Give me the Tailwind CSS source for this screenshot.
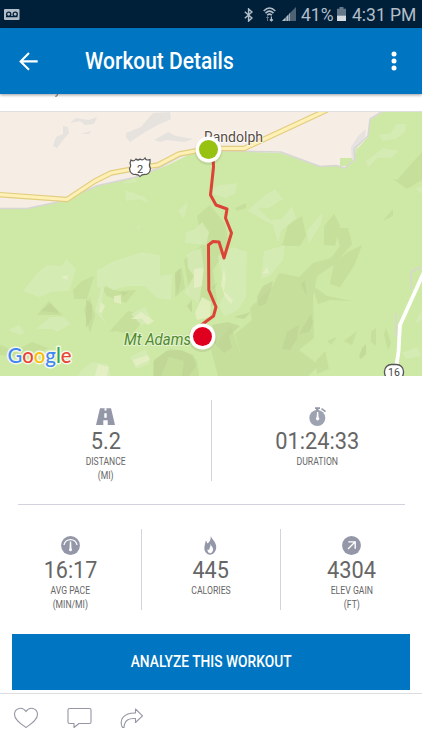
<!DOCTYPE html>
<html lang="en">
<head>
<meta charset="utf-8">
<title>Workout Details</title>
<script src="https://cdn.jsdelivr.net/npm/@tailwindcss/browser@4"></script>
</head>
<body class="w-[422px] h-[750px] overflow-hidden bg-white font-['Roboto',sans-serif] text-[#666] flex flex-col">
<div class="h-7 shrink-0 bg-[#00203a] flex items-center pl-1 pr-[5px] text-[17.5px] leading-none text-[#b3bfc8]">
  <svg class="w-4 h-[11px]" viewBox="0 0 16 11"><rect width="15.5" height="11" rx="1" fill="#b3bfc8"/><g fill="none" stroke="#00203a" stroke-width="1.3"><circle cx="4.7" cy="5.2" r="2.1"/><circle cx="11.2" cy="5.2" r="2.1"/><path d="M2 7.6h11.5"/></g></svg>
  <svg class="ml-auto w-[9px] h-[14px] mt-px" viewBox="0 0 9 14" fill="none" stroke="#b3bfc8" stroke-width="1.5"><path d="M.8 3.7 8 10 4.6 13V1L8 4 .8 10.3"/></svg>
  <svg class="ml-[10px] w-[13px] h-[15px]" viewBox="0 0 13 15" fill="none" stroke="#b3bfc8" stroke-width="1.5"><path d="M.7 4Q6.5-1.8 12.3 4M2.5 6.1Q6.5 2.2 10.5 6.1M4.2 8.3Q6.5 6 8.8 8.3"/><path d="m3.2 11 1.3-1.5L5.8 11M4.5 9.8V14" stroke-width="1" stroke="#647889"/><path d="M6.8 12.500 8.400 14l1.600-1.500M8.400 9.500v4.300" stroke-width="1.200"/></svg>
  <svg class="ml-[6px] w-[15px] h-[14px]" viewBox="0 0 15 14"><path d="M0 14 14 0v14Z" fill="#4d6375"/><path d="M0 14 3.5 10.5V14ZM4.5 9.5 6.3 7.7V14H4.5Z" fill="#b3bfc8"/><path d="M7.2 6.8 8 6v8h-.8Z" fill="#b3bfc8"/></svg>
  <span class="ml-[4px] mt-[3px] w-[33px]">41%</span>
  <svg class="ml-[3px] w-[9px] h-[14px]" viewBox="0 0 9 14"><path d="M2.5 0h4v1.800H9V14H0V1.800h2.500Z" fill="#647889"/><path d="M0 8.700h9V14H0Z" fill="#d5dce1"/></svg>
  <span class="ml-[6px] mt-[3px] w-[65px] whitespace-nowrap">4:31 PM</span>
</div>
<header class="relative z-10 h-[66px] shrink-0 bg-[#0075c1] shadow-[0_1px_3px_rgba(0,0,0,.4)] flex items-center pl-[19px] text-white">
  <svg class="w-[19px] h-[19px]" viewBox="0 0 19 19" fill="none" stroke="#fff" stroke-width="2.1"><path d="M18.7 9.4H1.7M10 1 1.6 9.4 10 17.8"/></svg>
  <h1 class="ml-[46.5px] pt-px w-[180px] origin-left scale-x-[.855] text-[24.5px] leading-none font-medium whitespace-nowrap">Workout Details</h1>
  <svg class="ml-auto mr-[25px] w-[6px] h-[20px]" viewBox="0 0 6 20" fill="#fff"><circle cx="3" cy="3.1" r="2.5"/><circle cx="3" cy="10" r="2.5"/><circle cx="3" cy="16.9" r="2.5"/></svg>
</header>
<div class="h-[18px] shrink-0 border-b border-[#dedee0] pl-[55px]"><svg class="w-1 h-[3px]" viewBox="0 0 4 3"><path d="M0 2Q2 3 2.5 0" fill="none" stroke="#888" stroke-width="1.2"/></svg></div>
<svg class="w-[422px] h-[264px] shrink-0 block" viewBox="0 112 422 264">
  <rect y="112" width="422" height="264" fill="#cee8a5"/>
  <!-- terrain relief -->
  <g fill="#c5df9b" opacity=".85">
    <path d="M241 355 235 334 252 320 250 308 272 287 279 273 299 277 313 263 331 258 340 246 335 228 348 228 352 244 335 264 317 276 313 297 314 338 299 350 319 365 308 376H218L211 350 231 326Z"/>
    <path d="M197 216 210 205 225 224 229 245 213 270 217 301 209 309 190 296 184 260 202 245Z"/>
    <path d="M288 225 302 216 306 236 300 246 282 246ZM324 226 334 214 340 225 335 246 324 245ZM397 180 422 152V180L407 189 393 179ZM334 263 348 252 362 245 354 266 340 287 330 284ZM73 290 82 281 94 276 87 299 74 299ZM37 315 49 301 62 315ZM84 310 90 297 95 316 90 333ZM312 285 327 296 352 301 330 300 318 304ZM316 361 325 351 329 369 317 374ZM327 341 337 337 331 345ZM344 341 357 331 352 345ZM371 332 376 328 376 346 371 342ZM386 328 391 343 388 350 384 335ZM100 285 118 291 136 290 126 303 107 296ZM175 272 182 268 185 288 175 297ZM0 345 15 351 32 342 48 348 34 358 0 355ZM109 332 128 311 146 316 131 336 117 331ZM153 362 170 349 184 351 197 360 199 376H153ZM235 208 246 203 246 208 237 211ZM386 217 393 209 393 216 383 221Z"/>
  </g>
  <g fill="#d7ebb8" opacity=".8">
    <path d="M23 291 38 272 47 265 62 266 66 259 76 269 69 291 52 292 39 297ZM97 270 114 261 127 257 142 252 160 255 160 276 172 274 171 300 157 298 145 286 128 286 113 290 105 285 100 310 106 324 95 311 101 289 97 286ZM36 329 50 317 64 317 71 324 57 332 53 329ZM187 254 201 248 204 270 199 303 184 293 194 276 188 268ZM218 256 233 247 247 252 246 298 237 311 224 316 219 306 225 293ZM264 251 285 245 283 260 270 276 261 279ZM8 330 19 325 25 333 20 335ZM130 357 146 349 150 364 136 369ZM80 372 91 362 108 364 111 376H78ZM131 314 145 307 153 322 141 325ZM210 190 220 185 237 183 236 193 226 198 210 193ZM247 211 265 195 275 189 283 199 269 208 258 208 270 220 282 219 292 206 296 218 281 231 278 243 273 225ZM307 231 323 212 321 224 309 244ZM185 243 186 232 195 229 202 222 209 232 206 245ZM366 161 383 148 399 151 391 158 377 158 368 168ZM382 141 379 134 390 134 396 124 406 124 405 132 396 139ZM125 190 145 197 148 203 139 199 126 201ZM121 184 135 178 137 182ZM136 228 140 224 139 229ZM178 211 188 202 184 219ZM415 188 422 187V194ZM414 324 422 310V320ZM402 353 417 347 422 356 406 359Z"/>
  </g>
  <g fill="#e6f0c5" opacity=".8"><path d="M221 285 224 268 226 278 224 291 233 300 231 304 225 297ZM131 319 141 312 154 321 148 325 142 319ZM99 312 101 302 105 306 102 313ZM114 296 121 295 121 304 114 302ZM195 313 202 297 211 302 210 317 197 320ZM95 376 98 364 109 367 107 376ZM61 277 68 275 67 280ZM262 274 267 267 269 273ZM194 269 203 268 202 286 194 288ZM133 360 148 355 150 360 136 366Z"/></g>
  <g fill="#bdd393" opacity=".65"><path d="M257 297 263 286 273 281 271 289 266 304 258 306ZM282 349 287 332 299 325 297 339 290 350ZM299 334 311 314 313 323 309 332ZM359 357 362 348 366 344 366 354 361 359ZM301 284 305 280 307 295 304 291ZM86 326 86 299 92 305 92 318 86 328ZM177 296 175 275 180 268 181 280ZM154 360 166 351 180 350 193 355 196 366 189 376H182L184 361 169 357 161 376H154ZM212 325 228 322 240 326 229 336 232 348 224 353 214 343ZM234 317 251 312 244 319ZM121 292 128 292 124 296ZM187 306 192 300 192 313ZM211 288 218 282 213 290ZM41 311 50 303 59 313Z"/></g>
  <path d="M0 112H383L370 120 368 137 357 149 354 160 345 168 336 165 320 166.500 281 153 222 151 192 153 168 165 138 177 97 186 60 202 27 208.500H0Z" fill="#f6ede5"/>
  <path d="M340 158h14v-8l3-7v12l-8 11h-9Z" fill="#cee8a5"/>
  <path d="M352 160 351 147 358 136 366 129 365 137 356 149 354 162Z" fill="#e5e2df"/>
  <g fill="#e6e2dd"><path d="M53 146 56 137 63 134 63 126 68 127 69 133 63 140 57 148ZM70 123 76 118 89 120 97 117 94 124 85 125 80 121ZM81 134 91 131 89 134ZM126 137 126 133 141 127 153 113 170 112 171 119 158 125 145 132 130 142ZM154 140 168 132 176 136 193 139 184 142 167 140 160 142Z"/></g>
  <path d="M0 208.500h27l33-7 38-16 36-8 24-9 22-12 12-4M222 151l59 1 39 14.500 16-1 9 2.500 10-9-1-10 14-13 2-17 13-8M411 289v-17l10-5M396 313v24" fill="none" stroke="#d7d6d4" stroke-width="1.500"/>
  <g fill="none" stroke-linejoin="round"><path d="M-2 194.500 67 199.500 95 181 111 173 135 168.500 158 165 179 154 209 148.500H244L327 110" stroke="#e2ce80" stroke-width="5.500"/><path d="M-2 194.500 67 199.500 95 181 111 173 135 168.500 158 165 179 154 209 148.500H244L327 110" stroke="#fff0b6" stroke-width="3.200"/>
  <path d="M424 272 400 325 398.500 352 396 368" stroke="#fff" stroke-width="3.800"/>
  <path d="M213 155 213.500 167 210.500 195 216 205 227 209 225.500 218 231.500 233 224 258 219 242 213 241.500 208.500 245 208.800 290 216 307 213.500 316 208 320 191 333" stroke="#db4437" stroke-width="3"/></g>
  <path d="M131 160q3 2 5-1 2 2 4 0 3 2 5-1 1 3 5 1.500v3q-1.500 3 .5 6-.5 5-4.500 6-4-.5-6 2-2-2.500-6-2-4-1-4.500-6 2-3 .5-5.500Z" fill="#fff" stroke="#555" stroke-width="1.200"/>
  <text x="140" y="172.800" text-anchor="middle" font-size="11" fill="#444">2</text>
  <rect x="384.500" y="364.500" width="19" height="15" rx="7" fill="#fff" stroke="#555" stroke-width="1.300"/>
  <text x="394" y="376" text-anchor="middle" font-size="10.500" fill="#444">16</text>
  <text x="204" y="142" textLength="59" lengthAdjust="spacingAndGlyphs" font-size="15.500" fill="#574b40" stroke="#fff" stroke-width="1.500" paint-order="stroke">Randolph</text>
  <text x="124" y="345" textLength="67" lengthAdjust="spacingAndGlyphs" font-size="16.500" font-style="italic" fill="#4d8a2b" stroke="#e6f3d3" stroke-width="2" paint-order="stroke">Mt Adams</text>
  <circle cx="208.500" cy="151" r="14" fill="#000" opacity=".07"/><circle cx="208.500" cy="149.500" r="13" fill="#fff"/><circle cx="208.500" cy="149.500" r="9.500" fill="#97c211"/>
  <circle cx="202.500" cy="338" r="14" fill="#000" opacity=".07"/><circle cx="202.500" cy="336.500" r="13" fill="#fff"/><circle cx="202.500" cy="336.500" r="9.500" fill="#df001f"/>
  <g font-family="Lato" font-size="20.500" font-weight="500"><text x="7.500" y="362.500" textLength="64" lengthAdjust="spacingAndGlyphs" stroke="#fff" stroke-opacity=".75" stroke-width="3" paint-order="stroke" stroke-linejoin="round"><tspan fill="#4285f4">G</tspan><tspan fill="#ea4335">o</tspan><tspan fill="#fbbc05">o</tspan><tspan fill="#4285f4">g</tspan><tspan fill="#34a853">l</tspan><tspan fill="#ea4335">e</tspan></text></g>
</svg>
<main class="h-[316px] shrink-0 flex flex-col">
  <section class="h-32 pt-6 grid grid-cols-2">
    <div class="h-[81px] flex flex-col items-center pt-[7px]">
      <svg class="w-[19px] h-[19px] shrink-0" viewBox="0 0 19 19"><path d="M4 1.300h11L19 18H0Z" fill="#9497a8"/><path d="M8.500 1.300h2v2.300h-2ZM8.300 6.200h2.400v4.500H8.300ZM7.300 13.300h4.400V18H7.300Z" fill="#fff"/></svg>
      <p class="mt-[3px] text-[24.5px] leading-[24px] scale-x-[.89]">5.2</p>
      <p class="mt-[2px] text-[11px] leading-[13.5px] text-center scale-x-[.78]">DISTANCE<br>(MI)</p>
    </div>
    <div class="h-[81px] border-l border-[#d2d3de] flex flex-col items-center pt-[7px]">
      <svg class="w-[19px] h-[19px] shrink-0" viewBox="0 0 19 19"><circle cx="9.300" cy="11" r="8" fill="#9da3b0"/><path d="M7 .2h5v1.700h-1.500V4H8V1.900H7ZM14 1l4 3-1 1.300-4-3Z" fill="#9497a8"/><path d="M9 5h1.200l.4 5.200a1.700 1.700 0 1 1-2 0Z" fill="#fff"/></svg>
      <p class="mt-[3px] text-[24.5px] leading-[24px] scale-x-[.89]">01:24:33</p>
      <p class="mt-[2px] text-[11px] leading-[13.5px] scale-x-[.79]">DURATION</p>
    </div>
  </section>
  <hr class="mx-[17.5px] border-[#d2d3de]">
  <section class="h-[129px] pt-6 grid grid-cols-3">
    <div class="h-[81px] flex flex-col items-center pt-[7px]">
      <svg class="w-[19px] h-[19px] shrink-0" viewBox="0 0 19 19"><circle cx="9.500" cy="9.500" r="9.400" fill="#9497a8"/><path d="M3 9a6.600 6.600 0 0 1 13 0" fill="none" stroke="#fff" stroke-width="1.300"/><path d="M8.800 5.500h1.400l.3 7a1.500 1.500 0 1 1-2 0Z" fill="#fff"/></svg>
      <p class="mt-[3px] text-[24.5px] leading-[24px] scale-x-[.88]">16:17</p>
      <p class="mt-[2px] text-[11px] leading-[13.5px] text-center scale-x-[.78]">AVG PACE<br>(MIN/MI)</p>
    </div>
    <div class="h-[81px] border-x border-[#d2d3de] flex flex-col items-center pt-[7px]">
      <svg class="w-[19px] h-[19px] shrink-0" viewBox="0 0 19 19"><path d="M9.800 0C10.500 3 14 5 14.800 8.500c1.600 5-1.500 9.800-5.300 10.200C5 18.800 2.500 14.500 3.600 10 4 7.500 4.600 6 4.800 4.500c1 .8 1.300 2 1.400 3C8.500 6.500 10 3.500 9.800 0Z" fill="#9497a8"/><path d="M9.500 7.500c.4 2.500 3 4 2.500 6.500-.3 2-1.500 3-2.700 3.200C7 17 6 15 6.800 13c.5.8.8 1 1.200 1.200.2-2.200 2-3.500 1.500-6.700Z" fill="#fff"/></svg>
      <p class="mt-[3px] text-[24.5px] leading-[24px] scale-x-[.88]">445</p>
      <p class="mt-[2px] text-[11px] leading-[13.5px] scale-x-[.79]">CALORIES</p>
    </div>
    <div class="h-[81px] flex flex-col items-center pt-[7px]">
      <svg class="w-[19px] h-[19px] shrink-0" viewBox="0 0 19 19"><circle cx="9.500" cy="9.500" r="9.400" fill="#9497a8"/><path d="M6 13 13 6M6.300 5.900h6.900v6.900" fill="none" stroke="#fff" stroke-width="1.400"/></svg>
      <p class="mt-[3px] text-[24.5px] leading-[24px] scale-x-[.89]">4304</p>
      <p class="mt-[2px] text-[11px] leading-[13.5px] text-center scale-x-[.79]">ELEV GAIN<br>(FT)</p>
    </div>
  </section>
  <button class="mx-3 h-14 bg-[#0075c1] text-white font-medium text-[16.3px] leading-none flex items-center justify-center whitespace-nowrap"><span class="pt-px scale-x-[.845]">ANALYZE THIS WORKOUT</span></button>
</main>
<footer class="mt-px h-[57px] shrink-0 border-t border-[#dcdce3] flex items-start pl-[13px] pt-[13px] gap-[28px]">
  <svg class="w-[26px] h-[22px]" viewBox="0 0 26 22" fill="none" stroke="#9497a4" stroke-width="1.100"><path d="M13 20.500C8 17 1.500 13 1.500 7.500 1.500 1 9.500-1 13 4.500 16.500-1 24.500 1 24.500 7.500 24.500 13 18 17 13 20.500Z"/></svg>
  <svg class="w-[25px] h-[22px]" viewBox="0 0 25 22" fill="none" stroke="#9497a4" stroke-width="1.100" stroke-linejoin="round"><path d="M2.500 1.500h20q1.500 0 1.500 1.500v12q0 1.500-1.500 1.500H12L7 20.500v-4H2.500Q1 16.500 1 15V3Q1 1.500 2.500 1.500Z"/></svg>
  <svg class="w-[24px] h-[22px]" viewBox="0 0 24 22" fill="none" stroke="#9497a4" stroke-width="1.100" stroke-linejoin="round"><path d="M15.500 2 22.500 8.800l-7 6.700v-4C9 11 4.500 13 4 20.500H2.500C-1.500 12.500 4 5.700 15.500 6Z"/></svg>
</footer>
</body>
</html>
